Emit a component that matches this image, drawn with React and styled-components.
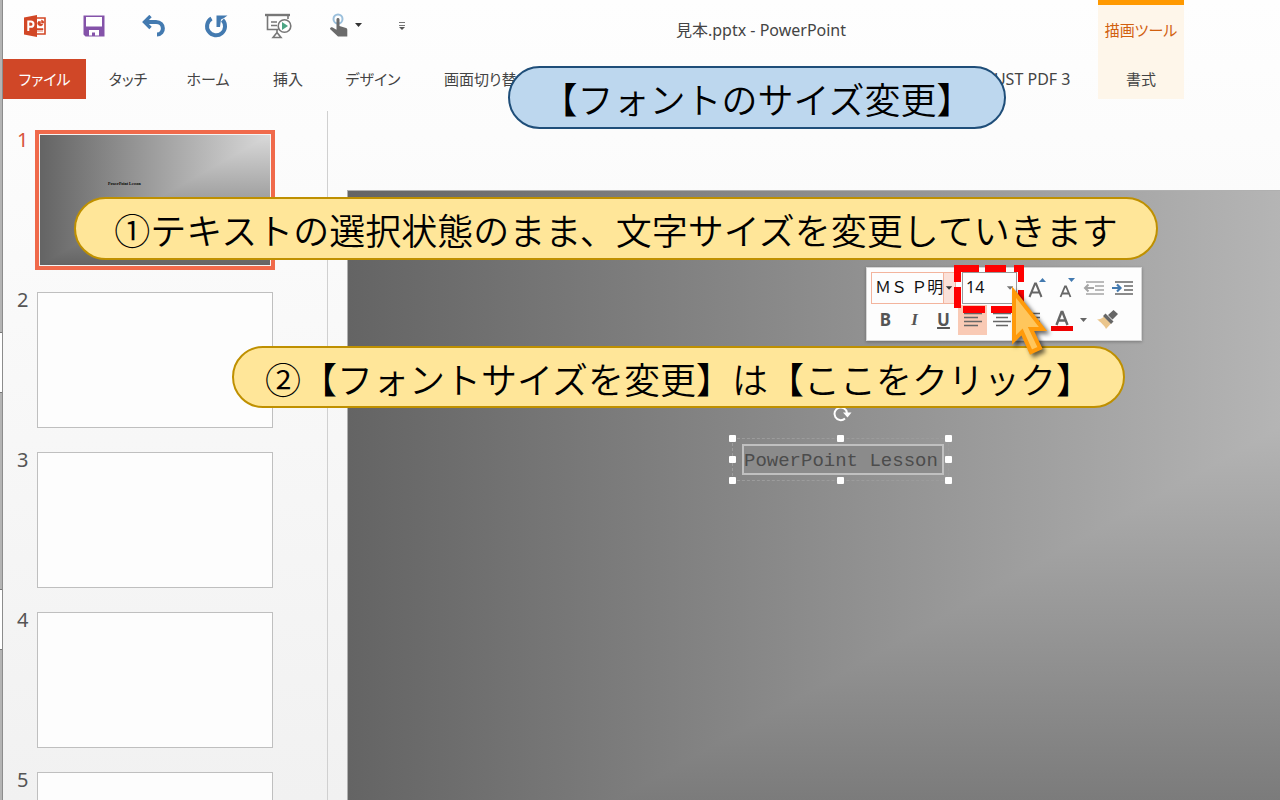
import React from "react";
import styled, { createGlobalStyle, css } from "styled-components";

const GlobalStyle = createGlobalStyle`
  *, *::before, *::after { box-sizing: border-box; }
  body { margin: 0; font-family: "Noto Sans", "Noto Sans CJK JP", sans-serif; color: #444; }
  button, select, input { font: inherit; color: inherit; margin: 0; padding: 0; border: 0; background: none; border-radius: 0; }
`;

const Page = styled.div`
  position: relative;
  display: flex;
  height: 100vh;
  overflow: hidden;
  background: linear-gradient(#fefefe, #fbfbfb 25%, #f1f1f1);
`;

/* Edge of the window lying behind this one */
const BackWindow = styled.div`
  flex: none;
  width: 3px;
  display: flex;
  flex-direction: column;
  background: #b4b4b4;
  border-right: 1px solid #8c8c8c;
`;
const BackGap = styled.div`
  height: ${(p) => p.$h}px;
`;
const BackPanel = styled.div`
  height: 61px;
  background: #fff;
  border: solid #777;
  border-width: 1px 0;
`;

const Window = styled.div`
  flex: 1;
  min-width: 0;
  display: flex;
  flex-direction: column;
`;

const Header = styled.header`
  display: flex;
  flex: none;
  padding-right: 96px;
`;
const HeaderMain = styled.div`
  flex: 1;
  min-width: 0;
`;
const TitleRow = styled.div`
  display: flex;
  height: 59px;
`;
const QuickAccess = styled.div`
  display: flex;
  flex: none;
  width: 421px;
  height: 51px;
  padding-left: 2px;
  align-items: center;
`;
const QuickButton = styled.button`
  display: flex;
  flex: none;
  align-items: center;
  justify-content: center;
  width: ${(p) => p.$width}px;
  height: 40px;
`;
const Title = styled.h1`
  flex: 1;
  margin: 0;
  font-size: 16px;
  line-height: 60px;
  font-weight: 400;
  text-align: center;
  white-space: nowrap;
`;

const Tabs = styled.nav`
  display: flex;
  height: 40px;
`;
const Tab = styled.button`
  flex: none;
  width: ${(p) => p.$width}px;
  font-size: 15px;
  line-height: 40px;
  font-feature-settings: "palt";
  text-align: center;
  white-space: nowrap;
  ${(p) => p.$file && css`
    margin-right: 2px;
    background: #d04727;
    color: #fff;
  `}
  ${(p) => p.$last && css`
    margin-left: auto;
    font-size: 16px;
  `}
`;
const ContextGroup = styled.div`
  flex: none;
  width: 86px;
  height: 99px;
  border-top: 5px solid #ff9900;
  background: #fef6ea;
  text-align: center;
`;
const ContextLabel = styled.div`
  height: 54px;
  font-size: 15px;
  line-height: 50px;
  color: #d1600f;
  font-feature-settings: "palt";
`;

const Body = styled.div`
  flex: 1;
  min-height: 0;
  display: flex;
  padding-top: 12px;
`;
const SlideList = styled.ol`
  flex: none;
  width: 325px;
  margin: 0;
  padding: 21px 0 0 14px;
  list-style: none;
  overflow: hidden;
  border-right: 1px solid #d0d0d0;
`;
const SlideItem = styled.li`
  display: flex;
  height: 136px;
  margin-bottom: 24px;
  font-size: 20px;
  line-height: 16px;
  color: ${(p) => (p.$active ? "#d8533a" : "#555")};
`;
const SlideNumber = styled.span`
  width: 20px;
`;
const Thumb = styled.div`
  width: 236px;
  height: 136px;
  background: #fdfdfd;
  border: ${(p) => (p.$active ? "3px solid #f4f4f4" : "1px solid #bfbfbf")};
  ${(p) => p.$active && css`
    outline: 4px solid #f06a4b;
    outline-offset: -2px;
  `}
`;
const SlideSurface = styled.div`
  position: relative;
  width: 100%;
  height: 100%;
  background: linear-gradient(to left, #d9d9d9, #646464);
  &::before {
    content: "";
    position: absolute;
    inset: 0;
    background: linear-gradient(#d9d9d9, #646464);
    clip-path: polygon(100% 0, 100% 100%, 0 100%);
  }
`;
const ThumbText = styled.span`
  position: absolute;
  left: 68px;
  top: 46px;
  font: bold 4px/5px "Liberation Serif", serif;
  color: #000;
`;

const Canvas = styled.main`
  flex: 1;
  min-width: 0;
  overflow: hidden;
  padding: 79px 0 0 19px;
`;
const SlideFrame = styled.div`
  width: 1353px;
  height: 761px;
  border: solid #b0b0b0;
  border-width: 1px 0 0 1px;
`;
const TextBox = styled.div`
  position: absolute;
  left: 384px;
  top: 247px;
  width: 217px;
  height: 43px;
  padding: 6px 5px 6px 10px;
  outline: 1px dashed #9c9c9c;
  outline-offset: -1px;
`;
const TextLine = styled.div`
  height: 31px;
  border: 2px solid #c0c0c0;
  background: #8b8b8b;
  font: 19px/30px "Liberation Mono", monospace;
  color: #4c4c4c;
  white-space: nowrap;
`;
const Handle = styled.i`
  position: absolute;
  left: ${(p) => p.$x};
  top: ${(p) => p.$y};
  width: 7px;
  height: 7px;
  margin: -4px 0 0 -4px;
  border-radius: 1px;
  background: #fff;
`;
const RotateIcon = styled.svg`
  position: absolute;
  left: 100px;
  top: -35px;
`;

const Callout = styled.div`
  position: absolute;
  left: ${(p) => p.$x}px;
  top: ${(p) => p.$y}px;
  width: ${(p) => p.$width}px;
  height: ${(p) => p.$height}px;
  border: 2px solid ${(p) => (p.$blue ? "#1f4e79" : "#bf9000")};
  border-radius: 32px;
  background: ${(p) => (p.$blue ? "#bdd7ee" : "#ffe699")};
  color: #000;
  font: 350 36px/60px "Noto Sans CJK JP", sans-serif;
  text-align: center;
  white-space: nowrap;
`;

const MiniToolbar = styled.div`
  position: absolute;
  left: 866px;
  top: 267px;
  width: 276px;
  height: 74px;
  padding: 4px;
  border: 1px solid #d6d6d6;
  background: #fdfdfd;
  box-shadow: 0 1px 3px #0004;
`;
const ToolRow = styled.div`
  display: flex;
  align-items: center;
  height: 32px;
`;
const Combo = styled.label`
  display: flex;
  width: ${(p) => p.$width}px;
  height: 32px;
  margin-right: ${(p) => p.$gap}px;
  border: 1px solid ${(p) => (p.$plain ? "#999" : "#f3b49d")};
  color: #111;
`;
const ComboSelect = styled.select`
  appearance: none;
  flex: 1;
  min-width: 0;
  height: 28px;
  padding-left: 3px;
  font-size: 16px;
  overflow: hidden;
  text-overflow: clip;
`;
const ComboArrow = styled.svg`
  flex: none;
  width: 12px;
  height: 30px;
  background: ${(p) => (p.$plain ? "none" : "#fbe1d9")};
  border-left: 1px solid ${(p) => (p.$plain ? "transparent" : "#f3b49d")};
`;
const ToolButton = styled.button`
  display: flex;
  flex: none;
  align-items: center;
  justify-content: center;
  width: 29px;
  height: 30px;
  font-size: 17px;
  line-height: 30px;
  font-weight: ${(p) => (p.$bold ? 700 : 400)};
  color: #555;
  background: ${(p) => (p.$active ? "#f9cab5" : "none")};
`;
const ColorGroup = styled.div`
  display: flex;
  padding-left: 2px;
  gap: 1px;
`;
const Italic = styled.i`
  font-family: "Liberation Serif", serif;
  font-weight: 700;
`;
const Underlined = styled.span`
  text-decoration: underline;
  text-decoration-thickness: 2px;
`;
const Highlight = styled.svg`
  position: absolute;
  left: 954px;
  top: 265px;
`;
const Pointer = styled.svg`
  position: absolute;
  left: 1005px;
  top: 282px;
  filter: drop-shadow(3px 3px 2px #0009);
`;

const PowerPointIcon = () => (
  <svg width="24" height="24" viewBox="0 0 24 24">
    <path d="M13 4h9v16h-9z" fill="#fff" stroke="#d24726" strokeWidth="1.6" />
    <path d="M15 7.5h2.5v2.5H20a2.7 2.7 0 1 1-5-2M18.500 6v3H21A3 3 0 0 0 18.500 6M14 14.500h6v1.500h-6zM14 17.200h6" fill="#d24726" stroke="#d24726" strokeWidth=".5" />
    <path d="M1 3.500 14 1v22L1 20.500z" fill="#d24726" />
    <path d="M5.300 17V7.500h2.500c3.600 0 3.600 5.300 0 5.300H5.500" fill="none" stroke="#fff" strokeWidth="2" />
  </svg>
);
const SaveIcon = () => (
  <svg width="22" height="22" viewBox="0 0 22 22">
    <path d="M1.500 1.500h19v19h-19z" fill="#fff" />
    <path fillRule="evenodd" d="M.500 .500h21V21.500h-19l-2-2zM3 2v9.500h16V2zM6 15v5.500h3v-3h3v3h4V15z" fill="#8453a9" />
  </svg>
);
const UndoIcon = () => (
  <svg width="26" height="22" viewBox="0 0 26 22" fill="none" stroke="#437ab0" strokeWidth="4">
    <path d="M3 7h12c9 0 9 12.500 1 12.500" />
    <path d="M9.500 1 3.500 7l6 6" strokeWidth="3.400" />
  </svg>
);
const RepeatIcon = () => (
  <svg width="24" height="24" viewBox="0 0 24 24">
    <path d="M7.500 4.500A9 9 0 1 0 18.500 6" fill="none" stroke="#437ab0" strokeWidth="4" />
    <path d="M12.500 1.500H23.500L20 4l-3 1.500-1 7.500h-3.500z" fill="#437ab0" />
  </svg>
);
const SlideShowIcon = () => (
  <svg width="28" height="26" viewBox="0 0 28 26" fill="none" stroke="#777" strokeWidth="1.600">
    <path d="M1 2h25" strokeWidth="2.400" />
    <path d="M3.500 3v13.500h11M24 3v3M7 9h6M7 12.500h6M13 17v3M9 24.500l4-5 4 5z" />
    <circle cx="20.500" cy="13" r="6.300" fill="#fff" />
    <path d="M18 9v8l6-4z" fill="#4ca584" stroke="none" />
  </svg>
);
const TouchIcon = () => (
  <svg width="34" height="26" viewBox="0 0 34 26">
    <circle cx="10" cy="6" r="4.500" fill="none" stroke="#9cc0dc" strokeWidth="2" />
    <path d="M8.500 6.500c0-2 3-2 3 0V13l6.500 2c1 .4 1.300 1 1.300 2v6.500H10L2 16c0-2 2.500-2 3.500-1l3 1.800z" fill="#6b6b6b" />
    <path d="M27 10h7l-3.500 4z" fill="#333" />
  </svg>
);
const MoreIcon = () => (
  <svg width="8" height="10" viewBox="0 0 8 10">
    <path d="M1 1.500h6M1 4.500h6" stroke="#777" strokeWidth="1.200" />
    <path d="M1 6h6L4 9z" fill="#555" />
  </svg>
);
const SizeIcon = ({ shrink }) => (
  <svg width="22" height="24" viewBox="0 0 22 24">
    {shrink ? (
      <>
        <path d="M6.500 21 11 10.500h1L16.500 21M8 17.500h7" fill="none" stroke="#666" strokeWidth="1.800" />
        <path d="M14 2h7l-3.500 4z" fill="#437ab0" />
      </>
    ) : (
      <>
        <path d="M4.500 21 10 7.500h1L16.500 21M6.500 16.500h8" fill="none" stroke="#666" strokeWidth="2" />
        <path d="M14 6h7l-3.500-4z" fill="#437ab0" />
      </>
    )}
  </svg>
);
const IndentIcon = ({ outdent }) => (
  <svg width="22" height="16" viewBox="0 0 22 16" fill="none" stroke={outdent ? "#a5a5a5" : "#666"} strokeWidth="1.600">
    <path d="M3 2h18M12 6h9M12 10h9M3 14h18" />
    {outdent ? (
      <path d="M11 8H2M5.500 4.500 2 8l3.500 3.500" strokeWidth="2" />
    ) : (
      <path d="M0 8h8M5 4.500 8.500 8 5 11.500" stroke="#437ab0" strokeWidth="2.200" />
    )}
  </svg>
);
const AlignIcon = ({ kind }) => {
  const d = {
    left: "M0 1.500h18M0 5.500h14M0 9.500h18M0 13.500h14",
    center: "M0 1.500h18M3 5.500h12M0 9.500h18M3 13.500h12",
    right: "M0 1.500h18M4 5.500h14M0 9.500h18M4 13.500h14",
  }[kind];
  return (
    <svg width="18" height="16" viewBox="0 0 18 16">
      <path d={d} stroke="#666" strokeWidth="1.400" />
    </svg>
  );
};
const FontColorIcon = () => (
  <svg width="22" height="24" viewBox="0 0 22 24">
    <path d="M5.500 17 10.500 4h1l5 13M7.500 12.500h7" fill="none" stroke="#666" strokeWidth="2.400" />
    <path d="M0 18h22v5H0z" fill="#f00000" />
  </svg>
);
const BrushIcon = () => (
  <svg width="22" height="20" viewBox="0 0 22 20">
    <path d="M1 9.500c3 0 5-1 7-3l7 7-5 5.500c-1-3-6-7.500-9-9.500z" fill="#ebc68d" />
    <path d="m7 6 2.500-2.500 8 8L15 14zM12 5l5.500-5L22 4l-5.500 5.500z" fill="#666" />
  </svg>
);
const ArrowGlyph = ({ plain }) => (
  <ComboArrow $plain={plain} viewBox="0 0 12 30">
    <path d="M2 13h7l-3.500 4z" fill={plain ? "#777" : "#333"} />
  </ComboArrow>
);

const quickTools = [
  ["PowerPoint", PowerPointIcon, 60],
  ["上書き保存", SaveIcon, 58],
  ["元に戻す", UndoIcon, 62],
  ["繰り返し", RepeatIcon, 62],
  ["先頭から開始", SlideShowIcon, 62],
  ["タッチ/マウス モードの切り替え", TouchIcon, 72],
  ["ユーザー設定", MoreIcon, 42],
];
const tabs = [
  ["タッチ", 80],
  ["ホーム", 80],
  ["挿入", 80],
  ["デザイン", 90],
  ["画面切り替え", 138],
];
const handles = [
  ["1px", "1px"], ["50%", "1px"], ["100%", "1px"],
  ["1px", "50%"], ["100%", "50%"],
  ["1px", "100%"], ["50%", "100%"], ["100%", "100%"],
];

export default function App() {
  return (
    <Page>
      <GlobalStyle />
      <BackWindow>
        <BackGap $h={332} />
        <BackPanel />
        <BackGap $h={196} />
        <BackPanel />
      </BackWindow>
      <Window>
        <Header>
          <HeaderMain>
            <TitleRow>
              <QuickAccess>
                {quickTools.map(([label, Icon, width]) => (
                  <QuickButton key={label} aria-label={label} $width={width}><Icon /></QuickButton>
                ))}
              </QuickAccess>
              <Title>見本.pptx - PowerPoint</Title>
            </TitleRow>
            <Tabs>
              <Tab $file $width={83}>ファイル</Tab>
              {tabs.map(([label, width]) => (
                <Tab key={label} $width={width}>{label}</Tab>
              ))}
              <Tab $last $width={136}>JUST PDF 3</Tab>
            </Tabs>
          </HeaderMain>
          <ContextGroup>
            <ContextLabel>描画ツール</ContextLabel>
            <Tab $width={84}>書式</Tab>
          </ContextGroup>
        </Header>
        <Body>
          <SlideList>
            {[1, 2, 3, 4, 5].map((n) => (
              <SlideItem key={n} $active={n === 1}>
                <SlideNumber>{n}</SlideNumber>
                <Thumb $active={n === 1}>
                  {n === 1 && (
                    <SlideSurface><ThumbText>PowerPoint Lesson</ThumbText></SlideSurface>
                  )}
                </Thumb>
              </SlideItem>
            ))}
          </SlideList>
          <Canvas>
            <SlideFrame>
              <SlideSurface>
                <TextBox>
                  <TextLine>PowerPoint Lesson</TextLine>
                  {handles.map(([x, y]) => (
                    <Handle key={x + y} $x={x} $y={y} />
                  ))}
                  <RotateIcon width="20" height="20" viewBox="0 0 20 20">
                    <path d="M13 15.500A6.300 6.300 0 1 1 15 10" fill="none" stroke="#fff" strokeWidth="2" />
                    <path d="M11 9.500h8.500L15.500 14.500z" fill="#fff" />
                  </RotateIcon>
                </TextBox>
              </SlideSurface>
            </SlideFrame>
          </Canvas>
        </Body>
      </Window>

      <MiniToolbar>
        <ToolRow>
          <Combo $width={85} $gap={6}>
            <ComboSelect aria-label="フォント"><option>ＭＳ Ｐ明朝</option></ComboSelect>
            <ArrowGlyph />
          </Combo>
          <Combo $plain $width={57} $gap={4}>
            <ComboSelect aria-label="フォント サイズ"><option>14</option></ComboSelect>
            <ArrowGlyph plain />
          </Combo>
          <ToolButton aria-label="フォント サイズの拡大"><SizeIcon /></ToolButton>
          <ToolButton aria-label="フォント サイズの縮小"><SizeIcon shrink /></ToolButton>
          <ToolButton aria-label="インデントを減らす"><IndentIcon outdent /></ToolButton>
          <ToolButton aria-label="インデントを増やす"><IndentIcon /></ToolButton>
        </ToolRow>
        <ToolRow>
          <ToolButton $bold>B</ToolButton>
          <ToolButton><Italic>I</Italic></ToolButton>
          <ToolButton $bold><Underlined>U</Underlined></ToolButton>
          <ToolButton $active aria-label="左揃え"><AlignIcon kind="left" /></ToolButton>
          <ToolButton aria-label="中央揃え"><AlignIcon kind="center" /></ToolButton>
          <ToolButton aria-label="右揃え"><AlignIcon kind="right" /></ToolButton>
          <ColorGroup>
            <ToolButton aria-label="フォントの色"><FontColorIcon /></ToolButton>
            <svg width="14" height="30" viewBox="0 0 14 30"><path d="M3 13h7l-3.500 4z" fill="#666" /></svg>
            <ToolButton aria-label="書式のコピー/貼り付け"><BrushIcon /></ToolButton>
          </ColorGroup>
        </ToolRow>
      </MiniToolbar>

      <Callout $blue $x={508} $y={66} $width={498} $height={63}>【フォントのサイズ変更】</Callout>
      <Callout $x={74} $y={197} $width={1084} $height={63}>①テキストの選択状態のまま、文字サイズを変更していきます</Callout>
      <Callout $x={232} $y={346} $width={893} $height={62}>②【フォントサイズを変更】は【ここをクリック】</Callout>

      <Highlight width="70" height="48" viewBox="0 0 70 48">
        <path
          d="M0 0h25v7H7v10H0zM31 0h21v7H31zM60 0h10v17h-6V7h-4zM0 22h7v21H0zM9 41h22v7H9zM37 41h22v7H37zM64 25h6v20h-6z"
          fill="#f00"
        />
      </Highlight>
      <Pointer width="50" height="80" viewBox="0 0 50 80">
        <path d="M9 10v48l8-8 9 20 9-4-9-19h12z" fill="#ffc65c" stroke="#ff9a0a" strokeWidth="4" />
      </Pointer>
    </Page>
  );
}
